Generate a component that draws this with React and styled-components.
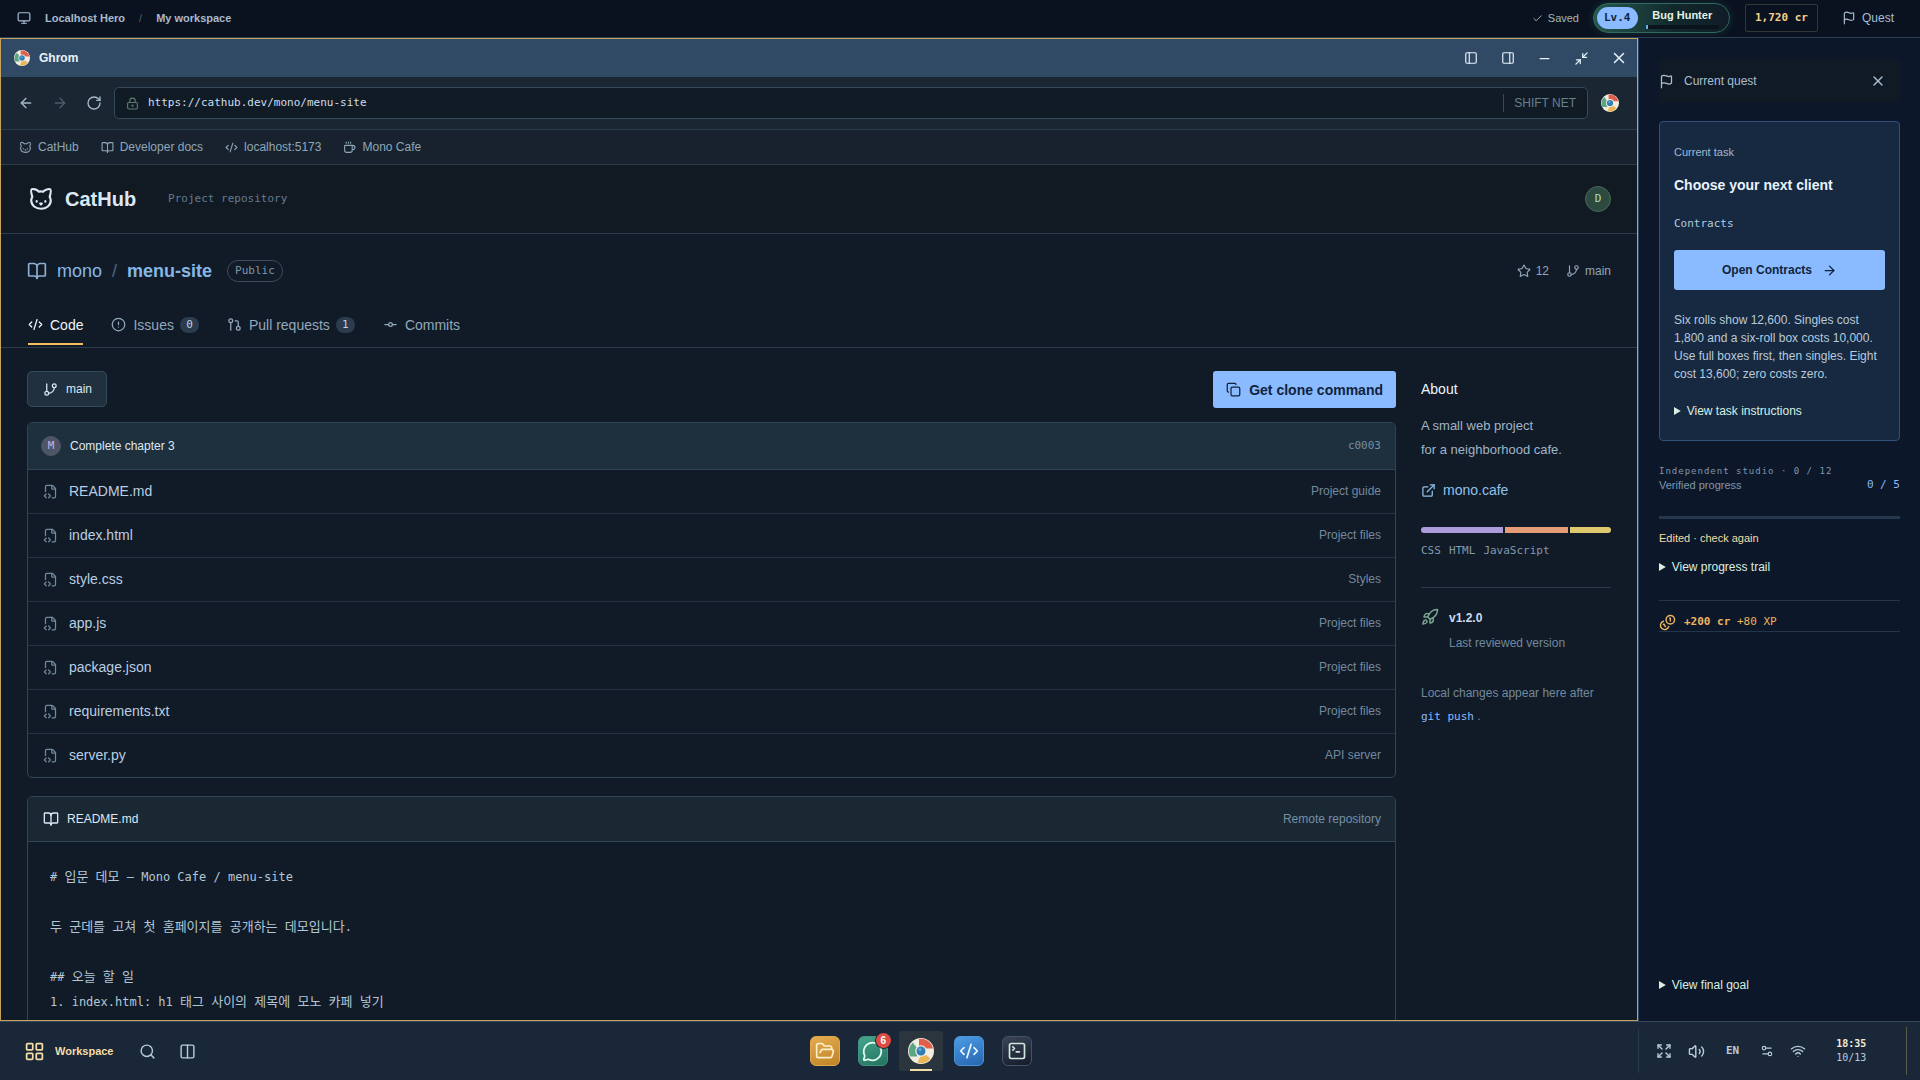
import {
  ArrowLeft,
  ArrowRight,
  BookOpen,
  Cat,
  Check,
  CircleAlert,
  CodeXml,
  Coffee,
  Columns2,
  Copy,
  Expand,
  ExternalLink,
  FileCodeCorner,
  Flag,
  FolderOpen,
  GitBranch,
  GitCommitHorizontal,
  GitPullRequest,
  LayoutGrid,
  LockKeyhole,
  MessageCircle,
  Minimize2,
  Minus,
  Monitor,
  PanelLeft,
  PanelRight,
  Rocket,
  RotateCw,
  Search,
  Settings2,
  SquareTerminal,
  Star,
  Volume2,
  Wifi,
  X,
} from "lucide-react";
import React from "react";
import styled, { createGlobalStyle, ThemeProvider } from "styled-components";

const theme = {
  sans: `"Liberation Sans", Arial, sans-serif`,
  mono: `"DejaVu Sans Mono", "Noto Sans CJK KR", monospace`,
  accent: "#8abaff",
  gold: "#c5a35c",
  cream: "#f4dca6",
  text: "#dce8f5",
  soft: "#a9bed3",
  muted: "#71899f",
  line: "#2b3d4d",
};

const GlobalStyles = createGlobalStyle`
  * {
    box-sizing: border-box;
  }
  body {
    margin: 0;
    background: #0c1829;
    color: ${theme.text};
    font: 12px/18px ${theme.sans};
  }
  h1, h2, h3, p, ul {
    margin: 0;
    padding: 0;
    font-size: inherit;
    font-weight: inherit;
  }
  ul {
    list-style: none;
  }
  a {
    color: inherit;
    text-decoration: none;
  }
  button {
    padding: 0;
    border: 0;
    background: none;
    color: inherit;
    font: inherit;
    cursor: pointer;
  }
  svg {
    flex: none;
    display: block;
  }
`;

const Mono = styled.span`
  font-family: ${(props) => props.theme.mono};
  font-size: 11px;
  color: ${(props) => props.$color || "inherit"};
  font-weight: ${(props) => (props.$bold ? 700 : 400)};
`;

const Spacer = styled.span`
  flex: 1;
`;

const DesktopStyles = styled.div`
  height: 100vh;
  display: flex;
  flex-direction: column;
  overflow: hidden;
`;

/* top bar */
const TopBarStyles = styled.header`
  flex: none;
  height: 38px;
  padding: 0 26px 1px 17px;
  display: flex;
  align-items: center;
  background: #0a1220;
  border-bottom: 1px solid #2b3d52;
  color: ${(props) => props.theme.soft};
  .crumbs {
    display: flex;
    gap: 14px;
    margin-left: 14px;
    font-size: 11px;
    font-weight: 700;
    color: #a9b9cb;
  }
  .slash {
    font-weight: 400;
    color: #4d6074;
  }
  .saved {
    display: flex;
    align-items: center;
    gap: 5px;
    margin-right: 14px;
    font-size: 11px;
    color: #a3b9b4;
  }
  .quest {
    display: flex;
    align-items: center;
    gap: 6px;
    margin-left: 24px;
    font-size: 12px;
  }
`;

const LevelPill = styled.div`
  display: flex;
  align-items: center;
  gap: 8px;
  width: 137px;
  height: 30px;
  padding: 0 10px 0 3px;
  border: 1px solid #33695f;
  border-radius: 15px;
  background: linear-gradient(90deg, #24584f, #12282c 60%, #0f1c26);
  box-shadow: 0 0 8px rgba(60, 130, 110, 0.25);
  .level {
    padding: 2px 7px;
    border-radius: 11px;
    background: ${(props) => props.theme.accent};
    color: #10233c;
  }
  .rank {
    flex: 1;
    display: flex;
    flex-direction: column;
    align-items: center;
    gap: 3px;
    font-size: 11px;
    line-height: 14px;
    font-weight: 700;
    color: #e2f3e6;
  }
`;

const RankBar = styled.span`
  align-self: stretch;
  height: 4px;
  border-radius: 1px;
  background: linear-gradient(90deg, #62b8f5 2px, #0b141d 2px);
`;

const Credits = styled(Mono)`
  margin-left: 15px;
  padding: 4px 9px;
  border: 1px solid #343637;
  border-radius: 2px;
  line-height: 18px;
`;

/* browser window */
const Middle = styled.div`
  flex: 1;
  min-height: 0;
  display: flex;
`;

const WindowStyles = styled.main`
  flex: 1;
  min-width: 0;
  display: flex;
  flex-direction: column;
  overflow: hidden;
  border: 1px solid ${(props) => props.theme.gold};
  background: #111b27;
`;

const TitleBar = styled.div`
  flex: none;
  height: 38px;
  padding-left: 13px;
  display: flex;
  align-items: center;
  gap: 9px;
  background: #304a66;
  font-weight: 700;
  color: #e9f2fb;
  .controls {
    display: flex;
  }
`;

const WindowButton = styled.button`
  width: 37px;
  height: 38px;
  display: grid;
  place-items: center;
`;

const NavBar = styled.div`
  flex: none;
  height: 53px;
  padding: 0 18px 0 8px;
  display: flex;
  align-items: center;
  background: #1a2733;
  border-bottom: 1px solid ${(props) => props.theme.line};
  > svg {
    margin-left: 13px;
  }
`;

const NavButton = styled.button`
  width: 34px;
  height: 34px;
  display: grid;
  place-items: center;
  color: ${(props) => (props.disabled ? "#4b5d6b" : "#a5b9c9")};
`;

const AddressBar = styled.label`
  flex: 1;
  height: 32px;
  margin-left: 3px;
  padding: 0 11px 0 11px;
  display: flex;
  align-items: center;
  gap: 9px;
  border: 1px solid #344a5a;
  border-radius: 5px;
  background: #111b26;
  color: #5f7d6c;
  input {
    flex: 1;
    padding: 0;
    border: 0;
    outline: 0;
    background: none;
    color: #cfdeeb;
    font: 11px/18px ${(props) => props.theme.mono};
  }
  .network {
    padding-left: 10px;
    border-left: 1px solid #344a5a;
    color: #66808f;
  }
`;

const Bookmarks = styled.nav`
  flex: none;
  height: 35px;
  padding: 0 18px;
  display: flex;
  align-items: center;
  gap: 22px;
  background: #17222e;
  border-bottom: 1px solid ${(props) => props.theme.line};
  color: #8fa6b8;
  a {
    display: flex;
    align-items: center;
    gap: 6px;
  }
`;

const SiteHeader = styled.div`
  flex: none;
  height: 69px;
  padding: 0 26px 0 27px;
  display: flex;
  align-items: center;
  background: #111a23;
  border-bottom: 1px solid ${(props) => props.theme.line};
  h1 {
    margin: 0 32px 0 11px;
    font-size: 20px;
    font-weight: 700;
  }
`;

const Avatar = styled.span`
  width: ${(props) => props.$size}px;
  height: ${(props) => props.$size}px;
  display: grid;
  place-items: center;
  border-radius: 50%;
  border: 1px solid ${(props) => props.$edge};
  background: ${(props) => props.$fill};
  color: ${(props) => props.$color};
  font: 11px/12px ${(props) => props.theme.mono};
`;

const RepoHead = styled.div`
  flex: none;
  padding: 26px 26px 0 26px;
  border-bottom: 1px solid ${(props) => props.theme.line};
  .title {
    display: flex;
    align-items: center;
    height: 22px;
    color: #8eafd2;
  }
  h2 {
    display: flex;
    gap: 10px;
    margin: 0 15px 0 10px;
    font-size: 18px;
    line-height: 22px;
    color: #86b7e6;
  }
  .sep {
    color: #4f6679;
  }
  .stat {
    display: flex;
    align-items: center;
    gap: 5px;
    margin-left: 17px;
    color: #91a5b8;
  }
`;

const Pill = styled(Mono)`
  padding: 1px 7px;
  border: 1px solid #3b4b59;
  border-radius: 11px;
`;

const Tabs = styled.nav`
  display: flex;
  gap: 28px;
  margin-top: 24px;
  padding: 0 1px 2px;
`;

const Tab = styled.a`
  height: 39px;
  display: flex;
  align-items: center;
  gap: 7px;
  font-size: 14px;
  color: ${(props) => (props.$active ? "#edf5fc" : "#93a8bb")};
  border-bottom: 2px solid
    ${(props) => (props.$active ? "#f5bd62" : "transparent")};
`;

const Count = styled(Mono)`
  width: 19px;
  margin-left: -1px;
  border-radius: 8px;
  background: #2a3c4e;
  line-height: 16px;
  text-align: center;
  color: #bed0e2;
`;

const RepoBody = styled.div`
  flex: 1;
  min-height: 0;
  display: grid;
  grid-template-columns: minmax(0, 1fr) 190px;
  gap: 25px;
  padding: 23px 26px 0 26px;
  overflow: hidden;
`;

const Toolbar = styled.div`
  display: flex;
  justify-content: space-between;
  align-items: flex-start;
  margin-bottom: 14px;
`;

const BranchButton = styled.button`
  height: 36px;
  padding: 0 14px 0 15px;
  display: flex;
  align-items: center;
  gap: 8px;
  border: 1px solid #344b5a;
  border-radius: 5px;
  background: #20303e;
`;

const PrimaryButton = styled.button`
  width: ${(props) => (props.$wide ? "100%" : "auto")};
  height: ${(props) => (props.$wide ? 40 : 37)}px;
  padding: 0 13px;
  display: flex;
  align-items: center;
  justify-content: center;
  gap: ${(props) => (props.$wide ? 10 : 8)}px;
  border-radius: 3px;
  background: ${(props) => props.theme.accent};
  color: #10233c;
  font-size: ${(props) => (props.$wide ? 12 : 14)}px;
  font-weight: 700;
`;

const Panel = styled.section`
  margin-bottom: 18px;
  border: 1px solid #2f4554;
  border-radius: 5px;
  overflow: hidden;
`;

const PanelHead = styled.div`
  height: ${(props) => (props.$commit ? 47 : 45)}px;
  padding: 0 14px 0 ${(props) => (props.$commit ? 13 : 15)}px;
  display: flex;
  align-items: center;
  gap: ${(props) => (props.$commit ? 9 : 8)}px;
  background: ${(props) => (props.$commit ? "#1e303d" : "#1a2834")};
  border-bottom: 1px solid #2f4554;
  .meta {
    color: #758fa4;
  }
`;

const FileRow = styled.li`
  height: 44px;
  padding: 0 14px 1px 15px;
  display: flex;
  align-items: center;
  gap: 11px;
  color: ${(props) => props.theme.muted};
  border-bottom: 1px solid #233442;
  &:last-child {
    height: 43px;
    border-bottom: 0;
  }
  a {
    flex: 1;
    font-size: 14px;
    color: #b9cee2;
  }
`;

const ReadmeText = styled.div`
  padding: 23px 22px;
  font: 12px/25px ${(props) => props.theme.mono};
  color: #b3c6d6;
  p {
    height: 25px;
    white-space: pre;
  }
  .hangul {
    font-size: 13px;
    line-height: 1;
  }
`;

const AboutStyles = styled.aside`
  padding-top: 9px;
  color: #71899f;
  h3 {
    font-size: 14px;
    color: #edf5fc;
  }
  .summary {
    margin-top: 16px;
    font-size: 13px;
    line-height: 24px;
    color: #a0b5c8;
  }
  .site {
    display: flex;
    align-items: center;
    gap: 7px;
    margin-top: 19px;
    font-size: 14px;
    color: #92c0ea;
  }
  .languages {
    display: flex;
    gap: 8px;
    margin-top: 9px;
    padding-bottom: 27px;
    border-bottom: 1px solid #2b3d4d;
    color: #8299ad;
  }
  .release {
    display: flex;
    gap: 10px;
    margin-top: 18px;
    line-height: 25px;
  }
  .release svg {
    margin-top: 2px;
  }
  .release strong {
    display: block;
    color: #cbdcec;
  }
  .note {
    margin-top: 26px;
    line-height: 23px;
  }
`;

const LanguageBar = styled.div`
  display: grid;
  grid-template-columns: 82fr 63fr 41fr;
  gap: 2px;
  height: 6px;
  margin-top: 28px;
  border-radius: 3px;
  overflow: hidden;
`;

const Language = styled.span`
  background: ${(props) => props.$color};
`;

/* quest panel */
const QuestStyles = styled.aside`
  flex: none;
  width: 282px;
  padding: 22px 20px 27px;
  display: flex;
  flex-direction: column;
  background: #0c1829;
  border-left: 1px solid #2b4560;
  .head {
    display: flex;
    align-items: center;
    justify-content: space-between;
    height: 42px;
    padding-right: 14px;
    background: #101a25;
    color: ${(props) => props.theme.soft};
  }
  .head span {
    display: flex;
    align-items: center;
    gap: 10px;
  }
  .studio {
    margin-top: 23px;
    font-size: 9px;
    line-height: 14px;
    letter-spacing: 1px;
  }
  .progress {
    display: flex;
    justify-content: space-between;
    font-size: 11px;
    line-height: 14px;
    color: #8296ae;
  }
  .track {
    height: 3px;
    margin-top: 24px;
    background: #26384e;
  }
  .edited {
    margin: 10px 0 11px;
    font-size: 11px;
    color: ${(props) => props.theme.cream};
  }
  .reward {
    display: flex;
    align-items: center;
    gap: 8px;
    height: 32px;
    margin-top: 24px;
    padding-top: 12px;
    border-top: 1px solid #243549;
    border-bottom: 1px solid #243549;
    color: #eeb35f;
  }
`;

const TaskCard = styled.section`
  margin-top: 19px;
  padding: 21px 14px 20px;
  border: 1px solid #304f7a;
  border-radius: 4px;
  background: #162941;
  .label {
    font-size: 11px;
    color: #a4b8d0;
  }
  h3 {
    margin: 15px 0 20px;
    font-size: 14px;
    font-weight: 700;
    color: #eaf3fd;
  }
  .place {
    margin-bottom: 17px;
  }
  .brief {
    margin: 21px 0 19px;
    color: #b9cadd;
  }
`;

const Disclosure = styled.details`
  color: #d8efe2;
  summary {
    cursor: pointer;
  }
`;

/* taskbar */
const TaskbarStyles = styled.footer`
  flex: none;
  height: 59px;
  display: flex;
  align-items: center;
  background: #192738;
  border-top: 1px solid #34475a;
  color: #b8cbdc;
  .start {
    display: flex;
    align-items: center;
    gap: 23px;
    padding: 0 8px 0 24px;
  }
  .workspace {
    display: flex;
    align-items: center;
    gap: 10px;
    margin-right: 2px;
    font-size: 11px;
    font-weight: 700;
    color: ${(props) => props.theme.cream};
  }
  .dock {
    flex: 1;
    display: flex;
    justify-content: center;
    gap: 4px;
  }
`;

const DockButton = styled.button`
  position: relative;
  width: 44px;
  height: 40px;
  display: grid;
  place-items: center;
  border-radius: 3px;
  background: ${(props) => (props.$active ? "#2a353d" : "none")};
  &::after {
    content: "";
    position: absolute;
    bottom: 0;
    width: 22px;
    height: 2px;
    background: ${(props) => (props.$active ? "#f4dca6" : "none")};
  }
`;

const AppTile = styled.span`
  width: 30px;
  height: 30px;
  display: grid;
  place-items: center;
  border-radius: 6px;
  border: 1px solid ${(props) => props.$edge};
  background: linear-gradient(160deg, ${(props) => props.$from}, ${(props) => props.$to});
  color: ${(props) => props.$color};
`;

const Badge = styled.span`
  position: absolute;
  top: 2px;
  right: 4px;
  width: 15px;
  height: 15px;
  border-radius: 50%;
  background: #dc4c40;
  box-shadow: 0 0 0 1px #192738;
  color: #fff;
  font: 700 10px/15px ${(props) => props.theme.sans};
`;

const Tray = styled.div`
  width: 282px;
  height: 44px;
  padding: 0 13px 0 17px;
  display: flex;
  align-items: center;
  gap: 16px;
  border-left: 1px solid #2b3b4b;
  .language {
    margin: 0 5px;
  }
  .clock {
    margin-left: 14px;
    font: 10px/14px ${(props) => props.theme.mono};
    text-align: center;
  }
  .clock strong {
    display: block;
    color: #f2ead7;
  }
  .edge {
    width: 1px;
    height: 48px;
    margin-left: auto;
    background: #5b5846;
  }
`;

const GhromLogo = ({ size }) => (
  <svg width={size} height={size} viewBox="0 0 26 26" fill="none">
    <circle cx="13" cy="13" r="13" fill="#f3ece0" />
    <path d="M11 1A12.2 12.2 0 0 1 25 10.6H18.6L11 8Z" fill="#e0604c" />
    <path d="M9.6 24.6L12.2 18.4L18 17L22.4 20.6A12.2 12.2 0 0 1 9.6 24.6Z" fill="#e9b653" />
    <path d="M4.8 4.4L9 10L9 18.6H2.2A12.2 12.2 0 0 1 4.8 4.4Z" fill="#5ba584" />
    <circle cx="13" cy="13" r="5.8" fill="#f3ece0" />
    <circle cx="13" cy="13" r="4.5" fill="#2f7fb5" />
    <circle cx="12" cy="11.6" r="1.6" fill="#62a9d4" />
  </svg>
);

const CoinsIcon = ({ size }) => (
  <svg
    width={size}
    height={size}
    viewBox="0 0 24 24"
    fill="none"
    stroke="currentColor"
    strokeWidth="2"
    strokeLinecap="round"
    strokeLinejoin="round"
  >
    <circle cx="16" cy="8" r="6" />
    <path d="M13.744 17.736a6 6 0 1 1-7.48-7.48" />
    <path d="M15 6h1v4" />
    <path d="m6.134 14.768.866-.5 2 3.464" />
  </svg>
);

const files = [
  ["README.md", "Project guide"],
  ["index.html", "Project files"],
  ["style.css", "Styles"],
  ["app.js", "Project files"],
  ["package.json", "Project files"],
  ["requirements.txt", "Project files"],
  ["server.py", "API server"],
];

const readme = [
  "# 입문 데모 — Mono Cafe / menu-site",
  "",
  "두 군데를 고쳐 첫 홈페이지를 공개하는 데모입니다.",
  "",
  "## 오늘 할 일",
  "1. index.html: h1 태그 사이의 제목에 모노 카페 넣기",
];

// Hangul looks small next to the mono face, so it gets its own size
const MixedText = ({ text }) =>
  text.split(/([가-힣]+)/).map((part, index) =>
    index % 2 ? (
      <span className="hangul" key={index}>
        {part}
      </span>
    ) : (
      part
    )
  );

const TopBar = () => (
  <TopBarStyles>
    <Monitor size={14} />
    <div className="crumbs">
      <span>Localhost Hero</span>
      <span className="slash">/</span>
      <span>My workspace</span>
    </div>
    <Spacer />
    <span className="saved">
      <Check size={11} />
      Saved
    </span>
    <LevelPill>
      <Mono className="level" $bold>
        Lv.4
      </Mono>
      <span className="rank">
        Bug Hunter
        <RankBar />
      </span>
    </LevelPill>
    <Credits $color="#f4d08a" $bold>
      1,720 cr
    </Credits>
    <button className="quest">
      <Flag size={14} />
      Quest
    </button>
  </TopBarStyles>
);

const About = () => (
  <AboutStyles>
    <h3>About</h3>
    <p className="summary">
      A small web project
      <br />
      for a neighborhood cafe.
    </p>
    <a className="site" href="#site">
      <ExternalLink size={15} />
      mono.cafe
    </a>
    <LanguageBar>
      <Language $color="#ae9bdc" />
      <Language $color="#e69c76" />
      <Language $color="#e0c86e" />
    </LanguageBar>
    <div className="languages">
      <Mono>CSS</Mono>
      <Mono>HTML</Mono>
      <Mono>JavaScript</Mono>
    </div>
    <div className="release">
      <Rocket size={18} color="#79a58f" />
      <p>
        <strong>v1.2.0</strong>
        Last reviewed version
      </p>
    </div>
    <p className="note">
      Local changes appear here after <Mono $color="#8abaff">git push</Mono> .
    </p>
  </AboutStyles>
);

const BrowserWindow = () => (
  <WindowStyles>
    <TitleBar>
      <GhromLogo size={16} />
      Ghrom
      <Spacer />
      <div className="controls">
        <WindowButton aria-label="Snap left">
          <PanelLeft size={14} />
        </WindowButton>
        <WindowButton aria-label="Snap right">
          <PanelRight size={14} />
        </WindowButton>
        <WindowButton aria-label="Minimize">
          <Minus size={15} />
        </WindowButton>
        <WindowButton aria-label="Restore">
          <Minimize2 size={15} />
        </WindowButton>
        <WindowButton aria-label="Close">
          <X size={18} />
        </WindowButton>
      </div>
    </TitleBar>
    <NavBar>
      <NavButton aria-label="Back">
        <ArrowLeft size={16} />
      </NavButton>
      <NavButton aria-label="Forward" disabled>
        <ArrowRight size={16} />
      </NavButton>
      <NavButton aria-label="Reload">
        <RotateCw size={16} />
      </NavButton>
      <AddressBar>
        <LockKeyhole size={13} />
        <input
          type="text"
          aria-label="Address"
          defaultValue="https://cathub.dev/mono/menu-site"
        />
        <span className="network">SHIFT NET</span>
      </AddressBar>
      <GhromLogo size={18} />
    </NavBar>
    <Bookmarks>
      <a href="#cathub">
        <Cat size={13} />
        CatHub
      </a>
      <a href="#docs">
        <BookOpen size={13} />
        Developer docs
      </a>
      <a href="#localhost">
        <CodeXml size={13} />
        localhost:5173
      </a>
      <a href="#cafe">
        <Coffee size={13} />
        Mono Cafe
      </a>
    </Bookmarks>
    <SiteHeader>
      <Cat size={26} />
      <h1>CatHub</h1>
      <Mono $color="#657b8f">Project repository</Mono>
      <Spacer />
      <Avatar $size={26} $fill="#2c4a40" $edge="#456a58" $color="#b4d9ba">
        D
      </Avatar>
    </SiteHeader>
    <RepoHead>
      <div className="title">
        <BookOpen size={20} />
        <h2>
          <a href="#mono">mono</a>
          <span className="sep">/</span>
          <strong>menu-site</strong>
        </h2>
        <Pill $color="#8095a8">Public</Pill>
        <Spacer />
        <span className="stat">
          <Star size={14} />
          12
        </span>
        <span className="stat">
          <GitBranch size={14} />
          main
        </span>
      </div>
      <Tabs>
        <Tab href="#code" $active>
          <CodeXml size={15} />
          Code
        </Tab>
        <Tab href="#issues">
          <CircleAlert size={15} />
          Issues
          <Count>0</Count>
        </Tab>
        <Tab href="#pulls">
          <GitPullRequest size={15} />
          Pull requests
          <Count>1</Count>
        </Tab>
        <Tab href="#commits">
          <GitCommitHorizontal size={15} />
          Commits
        </Tab>
      </Tabs>
    </RepoHead>
    <RepoBody>
      <div>
        <Toolbar>
          <BranchButton>
            <GitBranch size={15} />
            main
          </BranchButton>
          <PrimaryButton>
            <Copy size={15} />
            Get clone command
          </PrimaryButton>
        </Toolbar>
        <Panel>
          <PanelHead $commit>
            <Avatar $size={20} $fill="#4d5566" $edge="#4d5566" $color="#c3b6ea">
              M
            </Avatar>
            Complete chapter 3
            <Spacer />
            <Mono className="meta">c0003</Mono>
          </PanelHead>
          <ul>
            {files.map(([name, note]) => (
              <FileRow key={name}>
                <FileCodeCorner size={15} />
                <a href={`#${name}`}>{name}</a>
                {note}
              </FileRow>
            ))}
          </ul>
        </Panel>
        <Panel>
          <PanelHead>
            <BookOpen size={16} />
            README.md
            <Spacer />
            <span className="meta">Remote repository</span>
          </PanelHead>
          <ReadmeText>
            {readme.map((line, index) => (
              <p key={index}>
                <MixedText text={line} />
              </p>
            ))}
          </ReadmeText>
        </Panel>
      </div>
      <About />
    </RepoBody>
  </WindowStyles>
);

const QuestPanel = () => (
  <QuestStyles>
    <div className="head">
      <span>
        <Flag size={15} />
        Current quest
      </span>
      <button aria-label="Close quest">
        <X size={16} />
      </button>
    </div>
    <TaskCard>
      <p className="label">Current task</p>
      <h3>Choose your next client</h3>
      <p className="place">
        <Mono $color="#b5c9de">Contracts</Mono>
      </p>
      <PrimaryButton $wide>
        Open Contracts
        <ArrowRight size={15} />
      </PrimaryButton>
      <p className="brief">
        Six rolls show 12,600. Singles cost 1,800 and a six-roll box costs
        10,000. Use full boxes first, then singles. Eight cost 13,600; zero
        costs zero.
      </p>
      <Disclosure>
        <summary>View task instructions</summary>
      </Disclosure>
    </TaskCard>
    <Mono className="studio" $color="#8296ae">
      Independent studio · 0 / 12
    </Mono>
    <div className="progress">
      Verified progress
      <Mono $color="#8abaff">0 / 5</Mono>
    </div>
    <div className="track" />
    <p className="edited">Edited · check again</p>
    <Disclosure>
      <summary>View progress trail</summary>
    </Disclosure>
    <div className="reward">
      <CoinsIcon size={17} />
      <Mono>
        <strong>+200 cr</strong> +80 XP
      </Mono>
    </div>
    <Spacer />
    <Disclosure>
      <summary>View final goal</summary>
    </Disclosure>
  </QuestStyles>
);

const Taskbar = () => (
  <TaskbarStyles>
    <div className="start">
      <button className="workspace">
        <LayoutGrid size={21} />
        Workspace
      </button>
      <button aria-label="Search">
        <Search size={17} />
      </button>
      <button aria-label="Split view">
        <Columns2 size={17} />
      </button>
    </div>
    <div className="dock">
      <DockButton aria-label="Files">
        <AppTile $from="#e6ac50" $to="#bf8227" $edge="#e0a94f" $color="#fff0c9">
          <FolderOpen size={20} />
        </AppTile>
      </DockButton>
      <DockButton aria-label="Messages, 6 unread">
        <AppTile $from="#46a48c" $to="#227360" $edge="#3f957f" $color="#e5fff5">
          <MessageCircle size={21} />
        </AppTile>
        <Badge>6</Badge>
      </DockButton>
      <DockButton aria-label="Ghrom" $active>
        <GhromLogo size={26} />
      </DockButton>
      <DockButton aria-label="Editor">
        <AppTile $from="#4d9de4" $to="#2565b0" $edge="#4b94d6" $color="#eef7ff">
          <CodeXml size={20} />
        </AppTile>
      </DockButton>
      <DockButton aria-label="Terminal">
        <AppTile $from="#3a4556" $to="#141b2b" $edge="#465266" $color="#cfe6dd">
          <SquareTerminal size={20} />
        </AppTile>
      </DockButton>
    </div>
    <Tray>
      <Expand size={16} />
      <Volume2 size={17} />
      <Mono className="language" $bold>
        EN
      </Mono>
      <Settings2 size={14} />
      <Wifi size={16} />
      <p className="clock">
        <strong>18:35</strong>
        10/13
      </p>
      <span className="edge" />
    </Tray>
  </TaskbarStyles>
);

const App = () => {
  return (
    <ThemeProvider theme={theme}>
      <GlobalStyles />
      <DesktopStyles>
        <TopBar />
        <Middle>
          <BrowserWindow />
          <QuestPanel />
        </Middle>
        <Taskbar />
      </DesktopStyles>
    </ThemeProvider>
  );
};

export default App;
